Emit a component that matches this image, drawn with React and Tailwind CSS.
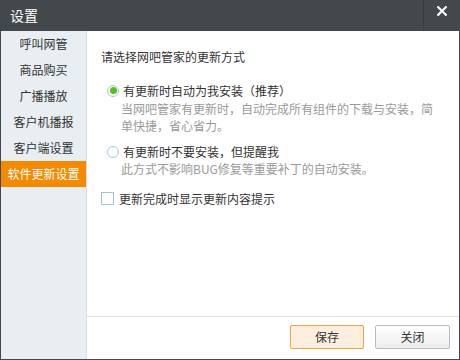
import React, { useState } from 'react';

const FONT = { fontFamily: '"Noto Sans CJK SC", "Noto Sans", sans-serif' };

const MENU = ['呼叫网管', '商品购买', '广播播放', '客户机播报', '客户端设置', '软件更新设置'];

function Radio({ checked }) {
  return (
    <span className="w-[12px] h-[12px] rounded-full border border-[#a9c9dd] bg-white flex items-center justify-center shrink-0">
      {checked && <span className="w-[7px] h-[7px] rounded-full bg-[#5bbf21]" />}
    </span>
  );
}

export default function App() {
  const [active, setActive] = useState(5);
  const [mode, setMode] = useState('auto');
  const [notify, setNotify] = useState(false);

  return (
    <div className="w-[460px] h-[360px] bg-[#43484c] flex flex-col text-[12px] text-[#333]" style={FONT}>
      {/* Title bar */}
      <div className="h-[31px] flex items-center shrink-0">
        <span className="pl-[10px] text-[14px] text-white flex-1">设置</span>
        <button className="w-[37px] h-[31px] border-l border-[#383c40] flex items-start justify-center pt-[6px]">
          <svg width="10" height="10" viewBox="0 0 10 10">
            <path d="M1.2 1.2 L8.8 8.8 M8.8 1.2 L1.2 8.8" stroke="#fff" strokeWidth="2.2" strokeLinecap="square" />
          </svg>
        </button>
      </div>

      <div className="flex-1 flex mx-[1px] mb-[1px] bg-white">
        {/* Sidebar */}
        <div className="w-[86px] bg-[#e8eef2] border-r border-[#d6dee3] flex flex-col shrink-0">
          {MENU.map((m, i) => (
            <div
              key={m}
              onClick={() => setActive(i)}
              className={`h-[26px] flex items-center justify-center cursor-pointer ${
                active === i ? 'bg-[#f38a00] text-white' : 'text-[#333]'
              }`}
            >
              {m}
            </div>
          ))}
        </div>

        {/* Content */}
        <div className="flex-1 flex flex-col">
          <div className="flex-1 pl-[14px] pt-[18px]">
            <p className="leading-[16px]">请选择网吧管家的更新方式</p>

            <div className="mt-[17px] pl-[6px]">
              <label className="flex items-center gap-[4px] leading-[17px] cursor-pointer" onClick={() => setMode('auto')}>
                <Radio checked={mode === 'auto'} />
                <span>有更新时自动为我安装（推荐）</span>
              </label>
              <p className="pl-[14px] mt-[1px] leading-[17px] text-[#9a9a9a] whitespace-nowrap">
                当网吧管家有更新时，自动完成所有组件的下载与安装，简<br />单快捷，省心省力。
              </p>

              <label className="mt-[9px] flex items-center gap-[4px] leading-[17px] cursor-pointer" onClick={() => setMode('remind')}>
                <Radio checked={mode === 'remind'} />
                <span>有更新时不要安装，但提醒我</span>
              </label>
              <p className="pl-[14px] leading-[17px] text-[#9a9a9a] whitespace-nowrap">
                此方式不影响BUG修复等重要补丁的自动安装。
              </p>
            </div>

            <label className="mt-[13px] flex items-center gap-[5px] leading-[17px] cursor-pointer" onClick={() => setNotify(n => !n)}>
              <span className="w-[13px] h-[13px] border border-[#9fc4d9] bg-white flex items-center justify-center shrink-0">
                {notify && (
                  <svg width="9" height="9" viewBox="0 0 9 9">
                    <path d="M1 4.5 L3.5 7 L8 1.5" stroke="#5bbf21" strokeWidth="1.6" fill="none" />
                  </svg>
                )}
              </span>
              <span>更新完成时显示更新内容提示</span>
            </label>
          </div>

          {/* Footer */}
          <div className="h-[43px] border-t border-[#dde2e5] flex items-start justify-end gap-[11px] pt-[8px] pr-[9px] shrink-0">
            <button className="w-[74px] h-[24px] border border-[#f5a040] bg-[#fdeedd] rounded-[2px] text-[#333]">保存</button>
            <button className="w-[75px] h-[24px] border border-[#bcbcbc] bg-gradient-to-b from-white to-[#ededed] rounded-[2px] text-[#333]">关闭</button>
          </div>
        </div>
      </div>
    </div>
  );
}
